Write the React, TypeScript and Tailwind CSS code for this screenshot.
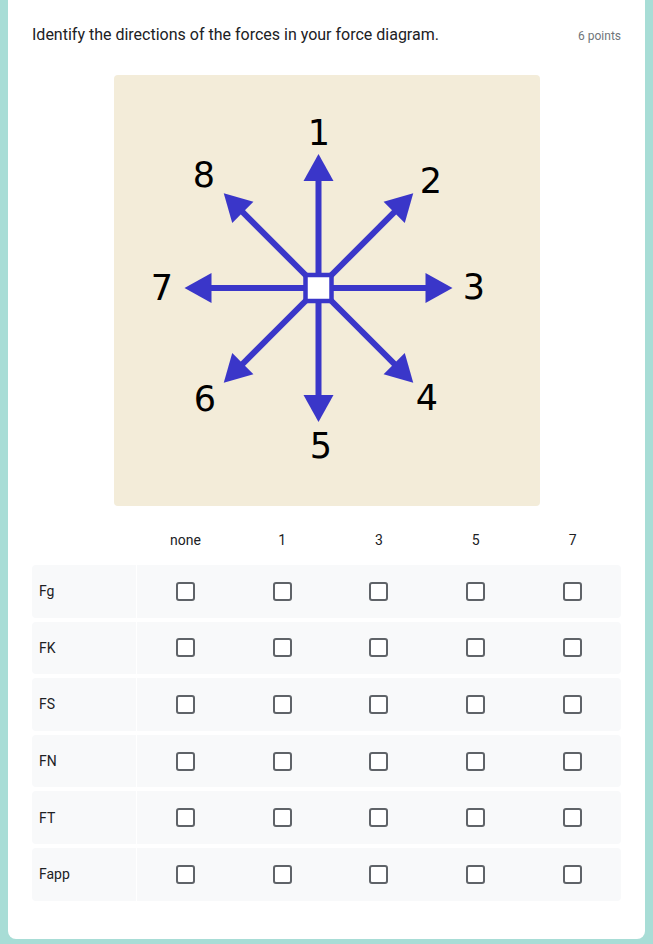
import React from 'react';

const rows = ['Fg', 'FK', 'FS', 'FN', 'FT', 'Fapp'];
const cols = ['none', '1', '3', '5', '7'];

const CX = 204.5;
const CY = 213;

// angle in degrees, 0 = up, clockwise
const arrows = [0, 45, 90, 135, 180, 225, 270, 315];

const labels: { t: string; x: number; y: number }[] = [
  { t: '1', x: 205, y: 58 },
  { t: '2', x: 317, y: 106 },
  { t: '3', x: 360, y: 212 },
  { t: '4', x: 313, y: 323 },
  { t: '5', x: 207, y: 371 },
  { t: '6', x: 91, y: 324 },
  { t: '7', x: 48, y: 213 },
  { t: '8', x: 90, y: 100 },
];

function Arrow({ deg }: { deg: number }) {
  const a = (deg * Math.PI) / 180;
  const ux = Math.sin(a);
  const uy = -Math.cos(a);
  const px = -uy;
  const py = ux;
  const L = 134;
  const head = 27;
  const hw = 15;
  const bx = CX + ux * (L - head);
  const by = CY + uy * (L - head);
  const tx = CX + ux * L;
  const ty = CY + uy * L;
  return (
    <g>
      <line x1={CX} y1={CY} x2={bx + ux * 2} y2={by + uy * 2} stroke="#3a36c9" strokeWidth={6} />
      <polygon
        points={`${tx},${ty} ${bx + px * hw},${by + py * hw} ${bx - px * hw},${by - py * hw}`}
        fill="#3a36c9"
      />
    </g>
  );
}

function ForceDiagram() {
  return (
    <svg width="426" height="431" viewBox="0 0 426 431" className="block">
      {arrows.map((d) => (
        <Arrow key={d} deg={d} />
      ))}
      <rect x={CX - 13} y={CY - 13} width={26} height={26} fill="#ffffff" stroke="#3a36c9" strokeWidth={4.5} />
      {labels.map((l) => (
        <text
          key={l.t}
          x={l.x}
          y={l.y}
          textAnchor="middle"
          dominantBaseline="central"
          fontFamily="'DejaVu Sans', sans-serif"
          fontSize={35}
          fill="#000000"
        >
          {l.t}
        </text>
      ))}
    </svg>
  );
}

function Checkbox() {
  return <div className="w-[19px] h-[19px] rounded-[3px] border-2 border-[#5f6368] bg-white" />;
}

export default function App() {
  return (
    <div className="min-h-[944px] bg-[#a8ddd6] px-2 pb-[5px] font-['Roboto',sans-serif]">
      <div className="bg-white rounded-b-lg px-6 pt-[23px] pb-[38px]">
        <div className="flex items-start justify-between">
          <h1 className="text-base leading-6 text-[#202124]">
            Identify the directions of the forces in your force diagram.
          </h1>
          <span className="text-xs leading-6 text-[#70757a] pt-px">6 points</span>
        </div>

        <div className="mt-[27px] mx-auto w-[426px] h-[431px] rounded bg-[#f3ecd9] overflow-hidden">
          <ForceDiagram />
        </div>

        <div className="mt-[14px]">
          <div className="flex h-10 items-center">
            <div className="w-[105px]" />
            {cols.map((c) => (
              <div key={c} className="flex-1 text-center text-sm text-[#202124]">
                {c}
              </div>
            ))}
          </div>
          <div className="mt-[5px] flex flex-col gap-1">
            {rows.map((r) => (
              <div key={r} className="flex h-[52.6px] rounded">
                <div className="w-[105px] bg-[#f8f9fa] rounded-l flex items-center pl-[7px] text-sm text-[#202124] border-r border-white">
                  {r}
                </div>
                {cols.map((c, i) => (
                  <div
                    key={c}
                    className={`flex-1 bg-[#f8f9fa] flex items-center justify-center ${i === cols.length - 1 ? 'rounded-r' : ''}`}
                  >
                    <Checkbox />
                  </div>
                ))}
              </div>
            ))}
          </div>
        </div>
      </div>
    </div>
  );
}
